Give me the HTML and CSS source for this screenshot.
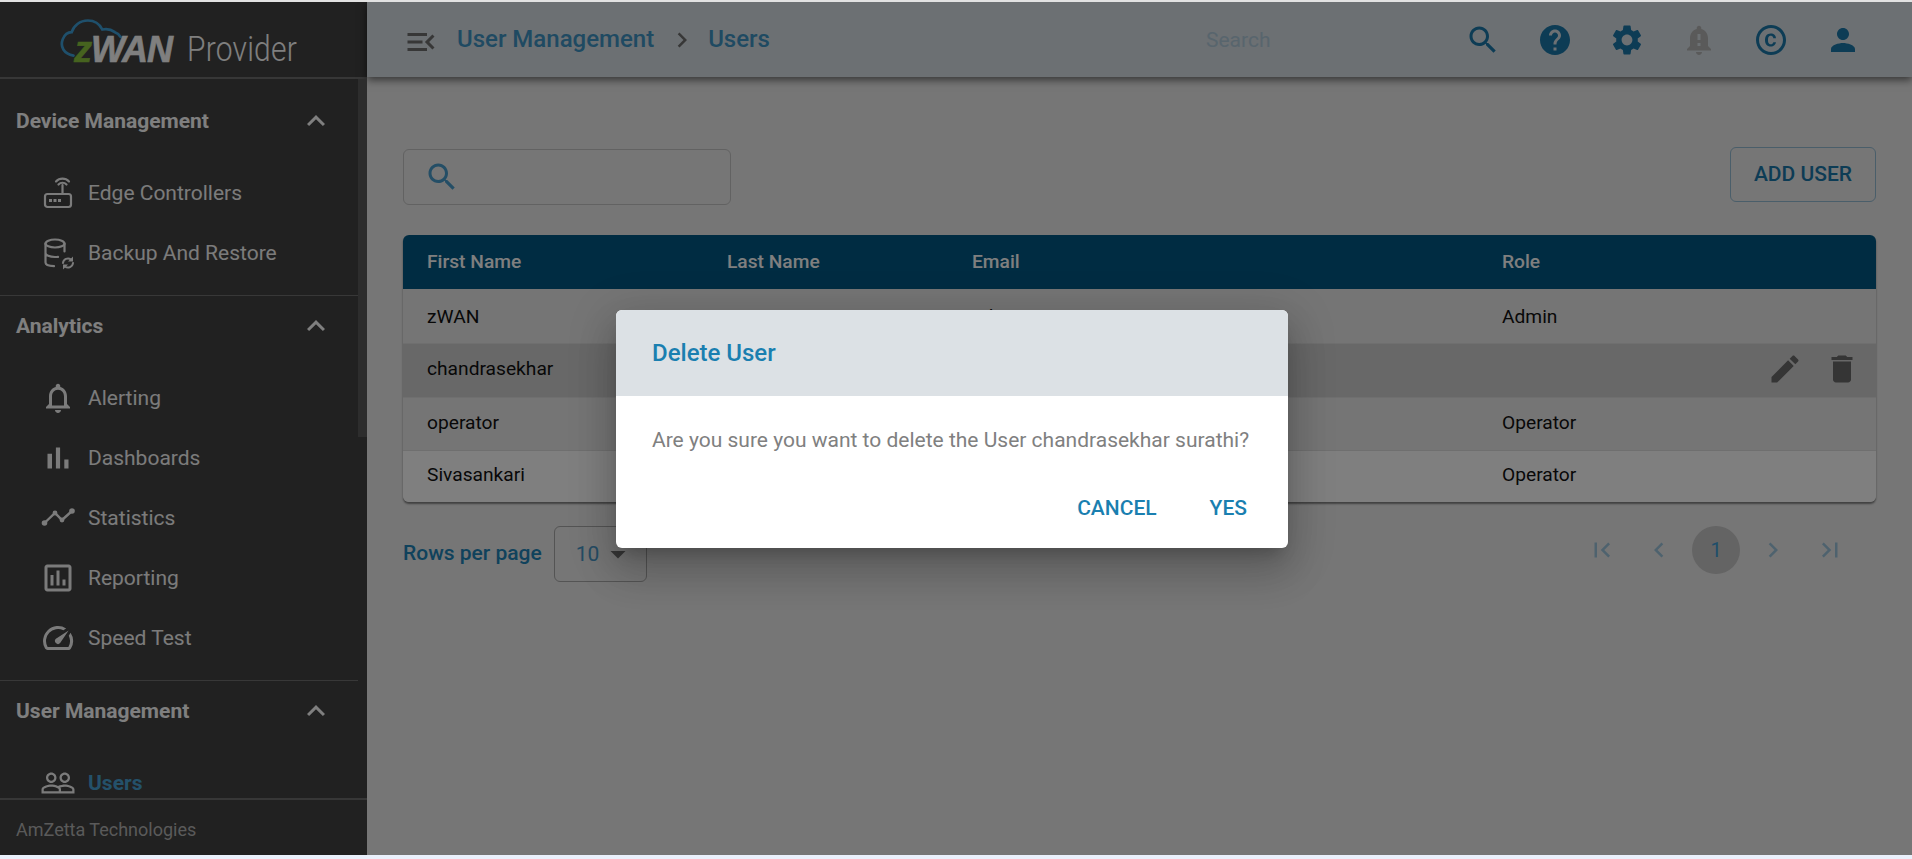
FILE: index.html
```html
<!DOCTYPE html>
<html lang="en">
<head>
  <meta charset="UTF-8" />
  <meta name="viewport" content="width=device-width, initial-scale=1.0" />
  <title>zWAN Provider - Users</title>
  <link rel="stylesheet" href="styles.css">
</head>
<body>
  <svg class="sprite" aria-hidden="true">
    <symbol id="i-search" viewBox="0 0 24 24"><path d="M15.5 14h-.79l-.28-.27C15.41 12.59 16 11.11 16 9.5 16 5.91 13.09 3 9.5 3S3 5.91 3 9.5 5.91 16 9.5 16c1.61 0 3.09-.59 4.23-1.57l.27.28v.79l5 4.99L20.49 19l-4.99-5zm-6 0C7.01 14 5 11.99 5 9.5S7.01 5 9.5 5 14 7.01 14 9.5 11.99 14 9.5 14z"/></symbol>
    <symbol id="i-help" viewBox="0 0 24 24"><path d="M12 2C6.48 2 2 6.48 2 12s4.48 10 10 10 10-4.48 10-10S17.52 2 12 2zm1 17h-2v-2h2v2zm2.07-7.75l-.9.92C13.45 12.9 13 13.5 13 15h-2v-.5c0-1.1.45-2.1 1.17-2.83l1.24-1.26c.37-.36.59-.86.59-1.41 0-1.1-.9-2-2-2s-2 .9-2 2H8c0-2.21 1.79-4 4-4s4 1.79 4 4c0 .88-.36 1.68-.93 2.25z"/></symbol>
    <symbol id="i-settings" viewBox="0 0 24 24"><path d="M19.14 12.94c.04-.3.06-.61.06-.94 0-.32-.02-.64-.07-.94l2.03-1.58c.18-.14.23-.41.12-.61l-1.92-3.32c-.12-.22-.37-.29-.59-.22l-2.39.96c-.5-.38-1.03-.7-1.62-.94l-.36-2.54c-.04-.24-.24-.41-.48-.41h-3.84c-.24 0-.43.17-.47.41l-.36 2.54c-.59.24-1.13.57-1.62.94l-2.39-.96c-.22-.08-.47 0-.59.22L2.74 8.87c-.12.21-.08.47.12.61l2.03 1.58c-.05.3-.09.63-.09.94s.02.64.07.94l-2.03 1.58c-.18.14-.23.41-.12.61l1.92 3.32c.12.22.37.29.59.22l2.39-.96c.5.38 1.03.7 1.62.94l.36 2.54c.05.24.24.41.48.41h3.84c.24 0 .44-.17.47-.41l.36-2.54c.59-.24 1.13-.56 1.62-.94l2.39.96c.22.08.47 0 .59-.22l1.92-3.32c.12-.22.07-.47-.12-.61l-2.01-1.58zM12 15.6c-1.98 0-3.6-1.62-3.6-3.6s1.62-3.6 3.6-3.6 3.6 1.62 3.6 3.6-1.62 3.6-3.6 3.6z"/></symbol>
    <symbol id="i-bell-alert" viewBox="0 0 24 24"><path d="M18 16v-5c0-3.07-1.64-5.64-4.5-6.32V4c0-.83-.67-1.5-1.5-1.5s-1.5.67-1.5 1.5v.68C7.63 5.36 6 7.93 6 11v5l-2 2v1h16v-1l-2-2zm-5 0h-2v-2h2v2zm0-4h-2V8h2v4zm-1 10c1.1 0 2-.9 2-2h-4c0 1.1.9 2 2 2z"/></symbol>
    <symbol id="i-copyright" viewBox="0 0 24 24"><path d="M10.08 10.86c.05-.33.16-.62.3-.87s.34-.46.59-.62c.24-.15.54-.22.91-.23.23.01.44.05.63.13.2.09.38.21.52.36s.25.33.34.53.13.42.14.64h1.79c-.02-.47-.11-.9-.28-1.29s-.4-.73-.7-1.01-.66-.5-1.08-.66-.88-.23-1.39-.23c-.65 0-1.22.11-1.7.34s-.88.53-1.2.92-.56.84-.71 1.36S8 11.29 8 11.87v.27c0 .58.08 1.12.23 1.64s.39.97.71 1.35.72.69 1.2.91 1.05.34 1.7.34c.47 0 .91-.08 1.32-.23s.77-.36 1.08-.63.56-.58.74-.94.29-.74.3-1.15h-1.79c-.01.21-.06.4-.15.58s-.21.33-.36.46-.32.23-.52.3c-.19.07-.39.09-.6.1-.36-.01-.66-.08-.89-.23-.25-.16-.45-.37-.59-.62s-.25-.55-.3-.88-.08-.67-.08-1v-.27c0-.35.03-.68.08-1.01zM12 2C6.48 2 2 6.48 2 12s4.48 10 10 10 10-4.48 10-10S17.52 2 12 2zm0 18c-4.41 0-8-3.59-8-8s3.59-8 8-8 8 3.59 8 8-3.59 8-8 8z"/></symbol>
    <symbol id="i-person" viewBox="0 0 24 24"><path d="M12 12c2.21 0 4-1.79 4-4s-1.79-4-4-4-4 1.79-4 4 1.79 4 4 4zm0 2c-2.67 0-8 1.34-8 4v2h16v-2c0-2.66-5.33-4-8-4z"/></symbol>
    <symbol id="i-menu-open" viewBox="0 0 24 24"><path d="M3 18h13v-2H3v2zm0-5h10v-2H3v2zm0-7v2h13V6H3zm18 9.59L17.42 12 21 8.41 19.59 7l-5 5 5 5L21 15.59z"/></symbol>
    <symbol id="i-expand-less" viewBox="0 0 24 24"><path d="M12 8l-6 6 1.41 1.41L12 10.83l4.59 4.58L18 14z"/></symbol>
    <symbol id="i-next" viewBox="0 0 24 24"><path d="M10 6L8.59 7.41 13.17 12l-4.58 4.59L10 18l6-6z"/></symbol>
    <symbol id="i-prev" viewBox="0 0 24 24"><path d="M15.41 7.41L14 6l-6 6 6 6 1.41-1.41L10.83 12z"/></symbol>
    <symbol id="i-first" viewBox="0 0 24 24"><path d="M18.41 16.59L13.82 12l4.59-4.59L17 6l-6 6 6 6zM6 6h2v12H6z"/></symbol>
    <symbol id="i-last" viewBox="0 0 24 24"><path d="M5.59 7.41L10.18 12l-4.59 4.59L7 18l6-6-6-6zM16 6h2v12h-2z"/></symbol>
    <symbol id="i-drop" viewBox="0 0 24 24"><path d="M7 10l5 5 5-5z"/></symbol>
    <symbol id="i-edit" viewBox="0 0 24 24"><path d="M3 17.25V21h3.75L17.81 9.94l-3.75-3.75L3 17.25zM20.71 7.04c.39-.39.39-1.02 0-1.41l-2.34-2.34c-.39-.39-1.02-.39-1.41 0l-1.83 1.83 3.75 3.75 1.83-1.83z"/></symbol>
    <symbol id="i-delete" viewBox="0 0 24 24"><path d="M6 19c0 1.1.9 2 2 2h8c1.1 0 2-.9 2-2V7H6v12zM19 4h-3.5l-1-1h-5l-1 1H5v2h14V4z"/></symbol>
    <symbol id="i-bell" viewBox="0 0 24 24"><path d="M12 22c1.1 0 2-.9 2-2h-4c0 1.1.9 2 2 2zm6-6v-5c0-3.07-1.63-5.64-4.5-6.32V4c0-.83-.67-1.5-1.5-1.5s-1.5.67-1.5 1.5v.68C7.64 5.36 6 7.92 6 11v5l-2 2v1h16v-1l-2-2zm-2 1H8v-6c0-2.48 1.51-4.5 4-4.5s4 2.02 4 4.5v6z"/></symbol>
    <symbol id="i-bars" viewBox="0 0 24 24"><path d="M5 9.2h3V19H5zM10.6 5h2.8v14h-2.8zm5.6 8H19v6h-2.8z"/></symbol>
    <symbol id="i-report" viewBox="0 0 24 24"><path d="M9 17H7v-7h2v7zm4 0h-2V7h2v10zm4 0h-2v-4h2v4zm2 2H5V5h14v14zm.1-16H4.9C3.8 3 3 3.9 3 5v14c0 1.1.8 2 1.9 2h14.2c1.1 0 1.9-.9 1.9-2V5c0-1.1-.8-2-1.9-2z"/></symbol>
    <symbol id="i-speed" viewBox="0 0 24 24"><path d="M20.38 8.57l-1.23 1.85a8 8 0 0 1-.22 7.58H5.07A8 8 0 0 1 15.58 6.85l1.85-1.23A10 10 0 0 0 3.35 19a2 2 0 0 0 1.72 1h13.85a2 2 0 0 0 1.74-1 10 10 0 0 0-.27-10.44z"/><path d="M10.59 15.41a2 2 0 0 0 2.83 0l5.66-8.49-8.49 5.66a2 2 0 0 0 0 2.83z"/></symbol>
    <symbol id="i-people" viewBox="0 0 24 24"><path d="M16.5 13c-1.2 0-3.07.34-4.5 1-1.43-.67-3.3-1-4.5-1C5.33 13 1 14.08 1 16.25V19h22v-2.75c0-2.17-4.33-3.25-6.5-3.25zm-4 4.5h-10v-1.25c0-.54 2.56-1.75 5-1.75s5 1.21 5 1.75v1.25zm9 0H14v-1.25c0-.46-.2-.86-.52-1.22.88-.3 1.96-.53 3.02-.53 2.44 0 5 1.21 5 1.75v1.25zM7.5 12c1.93 0 3.5-1.57 3.5-3.5S9.43 5 7.5 5 4 6.57 4 8.5 5.57 12 7.5 12zm0-5.5c1.1 0 2 .9 2 2s-.9 2-2 2-2-.9-2-2 .9-2 2-2zm9 5.5c1.93 0 3.5-1.57 3.5-3.5S18.43 5 16.5 5 13 6.57 13 8.5s1.57 3.5 3.5 3.5zm0-5.5c1.1 0 2 .9 2 2s-.9 2-2 2-2-.9-2-2 .9-2 2-2z"/></symbol>
    <symbol id="i-router" viewBox="0 0 36 36">
      <g fill="none" stroke="currentColor" stroke-width="2.2" stroke-linecap="round">
        <rect x="5" y="19" width="26" height="13" rx="2.5"/>
        <path d="M22.5 10v9M18.5 9.5a5.5 5.5 0 0 1 8 0M16 6.5a9 9 0 0 1 13 0"/>
      </g>
      <path d="M9 24h3v3H9zM13.5 24h3v3h-3zM18 24h3v3h-3z" fill="currentColor"/>
    </symbol>
    <symbol id="i-backup" viewBox="0 0 36 36">
      <g fill="none" stroke="currentColor" stroke-width="2.2" stroke-linecap="round">
        <ellipse cx="15" cy="8.5" rx="9.5" ry="4"/>
        <path d="M5.500 8.500v19c0 2 3.500 3.500 8.500 3.700M24.500 8.500v8M5.500 18c0 2.200 4 4 9.500 4 1 0 2 0 3-.2"/>
        <path d="M23 28a5 5 0 0 1 8-3.500M33 28a5 5 0 0 1-8 3.500" stroke-width="2"/>
      </g>
      <path d="M33 21.500v5h-5zM23 34.500v-5h5z" fill="currentColor"/>
    </symbol>
    <symbol id="i-stats" viewBox="0 0 36 36">
      <path d="M4.500 23L15 13l7 7 10-9" fill="none" stroke="currentColor" stroke-width="2.400"/>
      <circle cx="4.500" cy="23" r="2.800" fill="currentColor"/>
      <circle cx="15" cy="13" r="2.400" fill="currentColor"/>
      <circle cx="22" cy="20" r="2.400" fill="currentColor"/>
      <circle cx="32" cy="11" r="2.800" fill="currentColor"/>
    </symbol>
  </svg>

  <div class="app">
    <aside class="sidebar">
      <div class="brand">
        <div class="logo">
          <svg class="logo-cloud" viewBox="0 0 80 50" aria-hidden="true">
            <path d="M15 44C4 42 0 34 3 26c2-5 6-8 10-8 2-7 9-13 18-13 8 0 13 4 16 10 4-1 10 0 14 3 3 1 5 3 6 5" fill="none" stroke="currentColor" stroke-width="3" stroke-linecap="round"/>
          </svg>
          <span class="logo-mark"><span class="logo-z">z</span>WAN</span>
          <span class="logo-name">Provider</span>
        </div>
      </div>

      <nav class="nav">
        <div class="nav-inner">
          <section class="nav-group">
            <div class="nav-head">Device Management <svg class="ic"><use href="#i-expand-less"/></svg></div>
            <ul class="nav-list">
              <li class="nav-item"><svg class="ic"><use href="#i-router"/></svg>Edge Controllers</li>
              <li class="nav-item"><svg class="ic"><use href="#i-backup"/></svg>Backup And Restore</li>
            </ul>
          </section>
          <section class="nav-group">
            <div class="nav-head">Analytics <svg class="ic"><use href="#i-expand-less"/></svg></div>
            <ul class="nav-list">
              <li class="nav-item"><svg class="ic"><use href="#i-bell"/></svg>Alerting</li>
              <li class="nav-item"><svg class="ic"><use href="#i-bars"/></svg>Dashboards</li>
              <li class="nav-item"><svg class="ic"><use href="#i-stats"/></svg>Statistics</li>
              <li class="nav-item"><svg class="ic"><use href="#i-report"/></svg>Reporting</li>
              <li class="nav-item"><svg class="ic"><use href="#i-speed"/></svg>Speed Test</li>
            </ul>
          </section>
          <section class="nav-group">
            <div class="nav-head">User Management <svg class="ic"><use href="#i-expand-less"/></svg></div>
            <ul class="nav-list">
              <li class="nav-item nav-item-active"><svg class="ic"><use href="#i-people"/></svg>Users</li>
            </ul>
          </section>
        </div>
        <div class="nav-thumb"></div>
      </nav>

      <div class="side-foot">AmZetta Technologies</div>
    </aside>

    <div class="main">
      <header class="topbar">
        <svg class="ic menu-btn"><use href="#i-menu-open"/></svg>
        <div class="crumbs">
          <span>User Management</span>
          <svg class="crumb-sep"><use href="#i-next"/></svg>
          <span>Users</span>
        </div>
        <div class="top-search">Search</div>
        <div class="top-icons">
          <svg class="ic"><use href="#i-search"/></svg>
          <svg class="ic"><use href="#i-help"/></svg>
          <svg class="ic"><use href="#i-settings"/></svg>
          <svg class="ic top-bell"><use href="#i-bell-alert"/></svg>
          <svg class="ic"><use href="#i-copyright"/></svg>
          <svg class="ic"><use href="#i-person"/></svg>
        </div>
      </header>

      <main class="content">
        <div class="toolbar">
          <div class="search-box"><svg class="ic"><use href="#i-search"/></svg></div>
          <button class="add-btn">ADD USER</button>
        </div>

        <div class="table-wrap">
          <table class="users">
            <thead>
              <tr><th class="col-first">First Name</th><th class="col-last">Last Name</th><th class="col-mail">Email</th><th>Role</th></tr>
            </thead>
            <tbody>
              <tr class="row-top"><td>zWAN</td><td>Team</td><td>admin@zwan.com</td><td>Admin</td></tr>
              <tr class="row-hover">
                <td>chandrasekhar</td><td></td><td></td>
                <td class="cell-actions"><div class="actions"><svg class="ic"><use href="#i-edit"/></svg><svg class="ic"><use href="#i-delete"/></svg></div></td>
              </tr>
              <tr class="row-short"><td>operator</td><td></td><td></td><td>Operator</td></tr>
              <tr class="row-light"><td>Sivasankari</td><td></td><td></td><td>Operator</td></tr>
            </tbody>
          </table>
        </div>

        <div class="table-foot">
          <div class="rows-per-page">
            <span class="rows-label">Rows per page</span>
            <div class="rows-select"><span>10</span><svg class="ic"><use href="#i-drop"/></svg></div>
          </div>
          <div class="pager">
            <span class="page-btn"><svg class="page-ic"><use href="#i-first"/></svg></span>
            <span class="page-btn"><svg class="page-ic"><use href="#i-prev"/></svg></span>
            <span class="page-btn page-current">1</span>
            <span class="page-btn"><svg class="page-ic"><use href="#i-next"/></svg></span>
            <span class="page-btn"><svg class="page-ic"><use href="#i-last"/></svg></span>
          </div>
        </div>
      </main>
    </div>

    <div class="backdrop">
      <div class="dialog">
        <h2 class="dialog-title">Delete User</h2>
        <p class="dialog-text">Are you sure you want to delete the User chandrasekhar surathi?</p>
        <div class="dialog-actions">
          <button class="dialog-btn">CANCEL</button>
          <button class="dialog-btn">YES</button>
        </div>
      </div>
    </div>
  </div>
</body>
</html>
```

FILE: styles.css
```css
* {
  margin: 0;
  padding: 0;
  box-sizing: border-box;
}

html,
body {
  height: 859px;
  overflow: hidden;
}

body {
  font-family: "Roboto", sans-serif;
  background-color: #eaf0fb;
  border-top: 2px solid #e2e2e2;
  color: #111;
}

.sprite {
  display: none;
}

.ic {
  width: 36px;
  height: 36px;
  flex: none;
  fill: currentColor;
}

.app {
  position: relative;
  display: flex;
  height: 853px;
}

/* sidebar */
.sidebar {
  width: 367px;
  flex: none;
  display: flex;
  flex-direction: column;
  background-color: #424242;
  color: #fff;
}

.brand {
  height: 77px;
  flex: none;
  border-bottom: 2px solid #6e6e6e;
  display: flex;
  justify-content: center;
  padding-left: 4px;
}

.logo {
  position: relative;
  display: flex;
  align-items: flex-end;
  gap: 15px;
  height: 66px;
}

.logo-cloud {
  position: absolute;
  left: -14px;
  top: 14px;
  width: 72px;
  height: 45px;
  color: #3ea0d8;
}

.logo-mark {
  position: relative;
  font-family: "Liberation Sans", sans-serif;
  font-style: italic;
  font-weight: 700;
  font-size: 36px;
  line-height: 36px;
  letter-spacing: -1px;
  -webkit-text-stroke: 0.6px currentColor;
}

.logo-z {
  color: #8cc63f;
}

.logo-name {
  margin-bottom: -2px;
  font-weight: 300;
  font-size: 30px;
  line-height: 36px;
  letter-spacing: 0.2px;
  transform: scaleY(1.15);
  transform-origin: bottom;
}

.nav {
  position: relative;
  flex: 1;
  min-height: 0;
  overflow: hidden;
}

.nav-inner {
  width: 358px;
  padding-top: 12px;
}

/* scrollbar is drawn by hand, the browser hides the real one */
.nav-thumb {
  position: absolute;
  top: 0;
  right: 0;
  width: 9px;
  height: 358px;
  background-color: #5a5a5a;
}

.nav-group {
  border-bottom: 1px solid #707070;
}

.nav-group:last-child {
  border-bottom: none;
}

.nav-head {
  height: 60px;
  display: flex;
  align-items: center;
  justify-content: space-between;
  padding: 0 24px 0 16px;
  font-size: 21px;
  font-weight: 700;
}

.nav-list {
  list-style: none;
  padding: 12px 0;
}

.nav-item {
  height: 60px;
  display: flex;
  align-items: center;
  gap: 12px;
  padding-left: 40px;
  font-size: 21px;
  opacity: 0.96;
}

.nav-item-active {
  color: #4aa6dc;
  font-weight: 700;
}

.nav-item-active .ic {
  color: #fff;
}

.side-foot {
  height: 57px;
  flex: none;
  display: flex;
  align-items: center;
  padding: 4px 0 0 16px;
  border-top: 2px solid #6e6e6e;
  background-color: #424242;
  color: #b4b4b4;
  font-size: 18px;
}

/* main area */
.main {
  flex: 1;
  min-width: 0;
  display: flex;
  flex-direction: column;
  background-color: #ececec;
}

.topbar {
  height: 75px;
  flex: none;
  display: flex;
  align-items: center;
  padding: 0 51px 0 36px;
  background-color: #d8e0e6;
  box-shadow: 0 3px 8px rgba(0, 0, 0, 0.55);
}

.menu-btn {
  color: #6e6e6e;
  margin-top: 4px;
}

.crumbs {
  display: flex;
  align-items: center;
  width: 749px;
  margin-left: 18px;
  margin-bottom: 2px;
  font-size: 24px;
  font-weight: 500;
  color: #3f94c4;
}

.crumb-sep {
  width: 30px;
  height: 30px;
  margin: 2px 11px 0 13px;
  fill: #6e6e6e;
}

.top-search {
  flex: 1;
  font-size: 21px;
  color: #b0cadb;
}

.top-icons {
  display: flex;
  gap: 36px;
  margin-top: 1px;
  color: #1a78aa;
}

.top-bell {
  color: #b4b4b4;
}

.content {
  flex: 1;
  padding: 70px 36px 0;
}

.toolbar {
  display: flex;
  justify-content: space-between;
  align-items: flex-start;
}

.search-box {
  width: 328px;
  height: 56px;
  margin-top: 2px;
  display: flex;
  align-items: center;
  padding-left: 20px;
  border: 1px solid #c4c4c4;
  border-radius: 6px;
  color: #489ccc;
}

.add-btn {
  width: 146px;
  height: 55px;
  padding-bottom: 2px;
  background: none;
  border: 1px solid #94bcd4;
  border-radius: 6px;
  font-family: inherit;
  font-size: 21px;
  font-weight: 500;
  color: #1a78aa;
}

/* table */
.table-wrap {
  margin-top: 30px;
  border-radius: 6px;
  overflow: hidden;
  box-shadow: 0 2px 2px rgba(0, 0, 0, 0.45);
}

.users {
  width: 100%;
  border-collapse: collapse;
  table-layout: fixed;
  font-size: 19.2px;
}

.users th,
.users td {
  height: 54px;
  padding: 0 0 3px 24px;
  text-align: left;
}

.users td {
  font-weight: 400;
}

.users th {
  padding-bottom: 2px;
  background-color: #005884;
  color: #fff;
  font-weight: 500;
}

.users tbody tr {
  background-color: #eaeaea;
  border-bottom: 1px solid #dedede;
}

.users .row-top td {
  padding-top: 2px;
  padding-bottom: 0;
}

.users .row-hover {
  background-color: #d0d0d0;
}

.users .row-short td {
  height: 53px;
}

.users .row-light {
  background-color: #fff;
  border-bottom: none;
}

.users .row-light td {
  height: 52px;
}

.col-first {
  width: 300px;
}

.col-last {
  width: 245px;
}

.col-mail {
  width: 530px;
}

.users .cell-actions {
  padding-right: 16px;
}

.actions {
  display: flex;
  justify-content: flex-end;
  gap: 21px;
  color: #6a6a6a;
}

.table-foot {
  display: flex;
  justify-content: space-between;
  margin-top: 24px;
}

.rows-per-page {
  display: flex;
  align-items: center;
  gap: 12px;
  font-size: 21px;
  font-weight: 500;
  color: #2184b8;
}

.rows-label {
  margin-bottom: 2px;
}

.rows-select {
  width: 93px;
  height: 56px;
  display: flex;
  align-items: center;
  padding-left: 21px;
  border: 1px solid #a8a8a8;
  border-radius: 6px;
  font-weight: 400;
  font-size: 21px;
  color: #4898c8;
}

.rows-select .ic {
  color: #6e6e6e;
  margin-left: 1px;
}

.pager {
  display: flex;
  gap: 9px;
  margin-right: 22px;
  height: 48px;
}

.page-btn {
  width: 48px;
  height: 48px;
  display: flex;
  align-items: center;
  justify-content: center;
  border-radius: 50%;
  color: #9cc4dc;
}

.page-ic {
  width: 30px;
  height: 30px;
  fill: currentColor;
}

.page-current {
  background-color: #c8c8c8;
  color: #3c9cd4;
  font-size: 20px;
}

/* dialog */
.backdrop {
  position: absolute;
  inset: 0;
  display: flex;
  align-items: center;
  justify-content: center;
  padding-right: 8px;
  background-color: rgba(0, 0, 0, 0.5);
}

.dialog {
  width: 672px;
  height: 238px;
  background-color: #fff;
  border-radius: 6px;
  overflow: hidden;
  box-shadow: 0 11px 15px -7px rgba(0, 0, 0, 0.2), 0 24px 38px 3px rgba(0, 0, 0, 0.14), 0 9px 46px 8px rgba(0, 0, 0, 0.12);
}

.dialog-title {
  height: 86px;
  display: flex;
  align-items: center;
  padding-left: 36px;
  background-color: #dce1e5;
  font-size: 24px;
  font-weight: 500;
  color: #1a7fb0;
}

.dialog-text {
  padding: 32px 36px 0;
  font-size: 21px;
  line-height: 24px;
  color: #808080;
}

.dialog-actions {
  display: flex;
  justify-content: flex-end;
  gap: 53px;
  padding: 44px 41px 0 0;
}

.dialog-btn {
  background: none;
  border: none;
  font-family: inherit;
  font-size: 21px;
  font-weight: 500;
  color: #1a7fb0;
}
```
